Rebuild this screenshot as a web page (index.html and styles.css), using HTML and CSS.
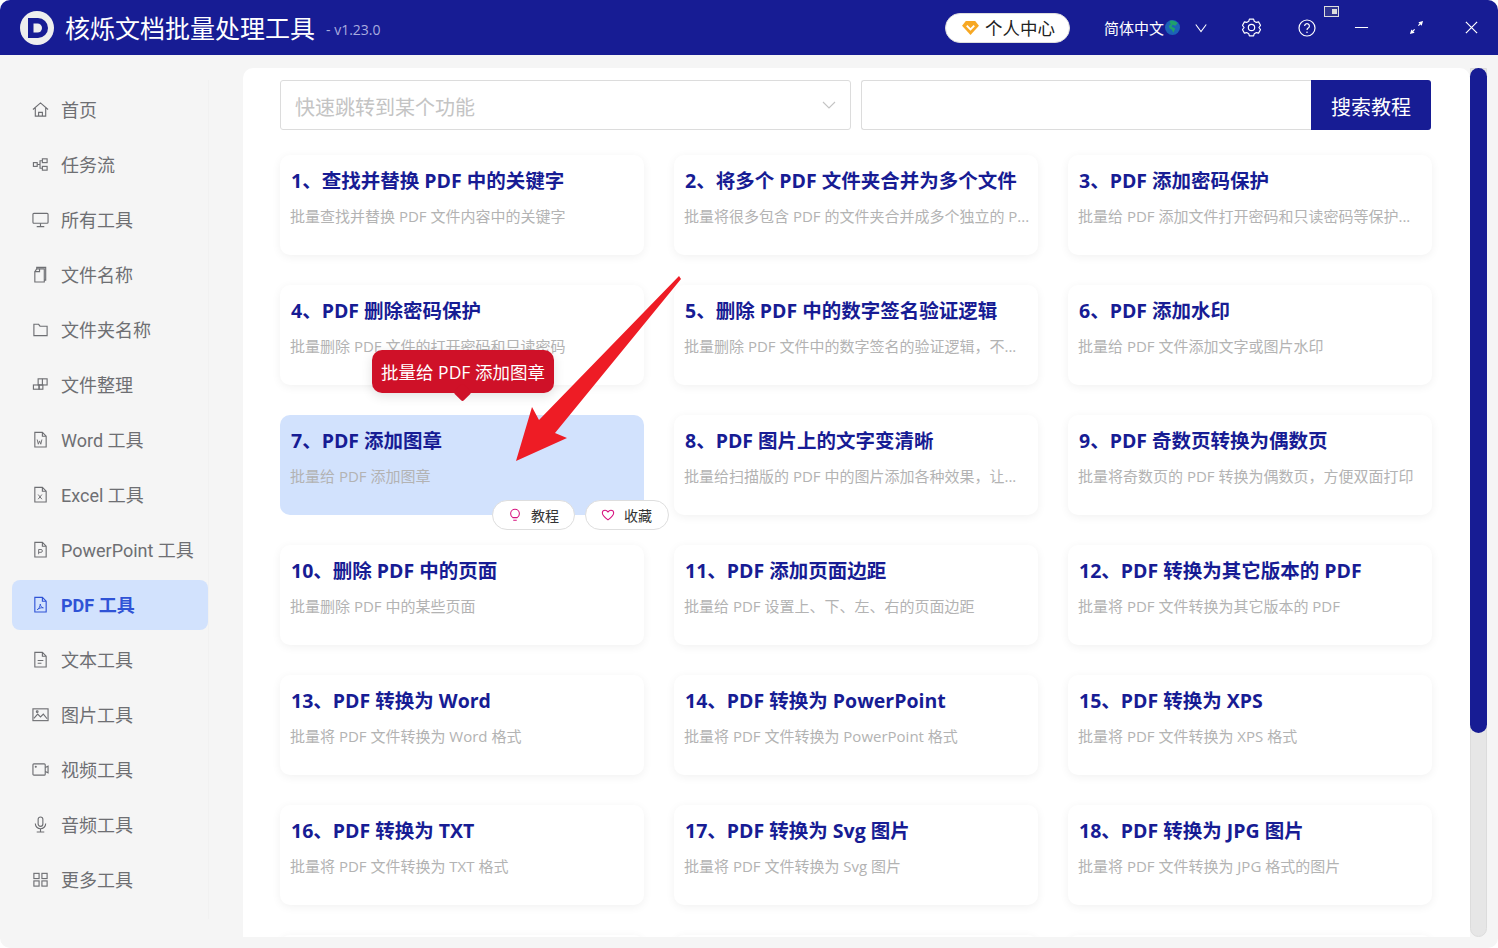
FILE: index.html
```html
<!DOCTYPE html>
<html lang="zh-CN">
<head>
<meta charset="utf-8">
<title>核烁文档批量处理工具</title>
<link rel="stylesheet" href="styles.css">
</head>
<body>
<div class="app">
  <header class="topbar">
    <svg class="logo" viewBox="0 0 36 36"><circle cx="18" cy="18" r="17" fill="#eeeeee"/><path d="M9 8h10a10 10 0 0 1 0 20H9z" fill="#171c94"/><path d="M14.500 13.500h4a4.500 4.500 0 0 1 0 9h-4z" fill="#eeeeee"/></svg>
    <span class="app-title">核烁文档批量处理工具</span>
    <span class="version">- v1.23.0</span>
    <span class="spacer"></span>
    <button class="profile">
      <svg class="diamond" viewBox="0 0 18 16"><path d="M4 1h10l4 5-9 10L0 6z" fill="#f7a823"/><path d="M5 6l4 4 4-4" fill="none" stroke="#fff" stroke-width="2"/></svg>
      个人中心
    </button>
    <span class="lang">简体中文</span>
    <svg class="globe" viewBox="0 0 16 16"><circle cx="8" cy="8" r="8" fill="#1c62b8"/><path d="M5 1c3-1 6 0 8.500 2.500l-2.500 2.500-3-1-1 2 4 2-2 4.500-2-3.500-2-1-1-3 2-1z" fill="#1fa06c"/></svg>
    <svg class="ctl chev" viewBox="0 0 16 16"><path d="M2 4l6 8 6-8" fill="none" stroke="#fff" stroke-width="1.200"/></svg>
    <svg class="ctl gear" viewBox="0 0 18 18"><path d="M7 1h4l.6 2.100 2 1.100 2.100-.5 1.900 3.300L16 9l1.600 2-1.900 3.300-2.100-.5-2 1.100L11 17H7l-.6-2.100-2-1.100-2.100.5L.4 11 2 9 .4 7l1.900-3.300 2.100.5 2-1.100z" fill="none" stroke="#fff" stroke-width="1.100" stroke-linejoin="round"/><circle cx="9" cy="9" r="3" fill="none" stroke="#fff" stroke-width="1.100"/></svg>
    <svg class="ctl help" viewBox="0 0 18 18"><circle cx="9" cy="9" r="8" fill="none" stroke="#fff" stroke-width="1.200"/><path d="M6.600 7a2.400 2.400 0 1 1 3.600 2.100c-.8.500-1.200.9-1.200 1.900" fill="none" stroke="#fff" stroke-width="1.200"/><circle cx="9" cy="13.300" r=".8" fill="#fff"/></svg>
    <svg class="ctl pip" viewBox="0 0 16 12"><rect x=".5" y=".5" width="14" height="10" fill="#30348f" stroke="#ddd"/><rect x="8" y="3" width="5" height="5" fill="#ddd"/></svg>
    <svg class="ctl min" viewBox="0 0 16 16"><path d="M1 8h14" stroke="#fff" stroke-width="1.300"/></svg>
    <svg class="ctl expand" viewBox="0 0 16 16"><path d="M15 1l-5 1.500L13.500 6zM1 15l5-1.500L2.500 10z" fill="#fff"/><path d="M12 4l-2 2M4 12l2-2" stroke="#fff" stroke-width="1.200"/></svg>
    <svg class="ctl close" viewBox="0 0 16 16"><path d="M2 2l12 12M14 2L2 14" stroke="#fff" stroke-width="1.300"/></svg>
  </header>

  <div class="body">
    <nav class="sidebar">
      <a class="nav"><svg viewBox="0 0 18 18"><path d="M1 9l8-7 8 7M3.500 7.500V16h11V7.500M7 16v-4h4v4"/></svg>首页</a>
      <a class="nav"><svg viewBox="0 0 18 18"><rect x="1.500" y="7" width="4" height="4"/><rect x="11" y="3" width="5" height="4"/><rect x="11" y="11" width="5" height="4"/><path d="M5.500 9H8.500V5H11M8.500 9v4H11"/></svg>任务流</a>
      <a class="nav"><svg viewBox="0 0 18 18"><rect x="1" y="2.500" width="16" height="10.500" rx="1"/><path d="M9 13v3M5 16.500h8"/></svg>所有工具</a>
      <a class="nav"><svg viewBox="0 0 18 18"><path d="M5 3V1.500h9.500V15H13M5 3L3 6v11h10V3z"/><path d="M8 3v3H3"/></svg>文件名称</a>
      <a class="nav"><svg viewBox="0 0 18 18"><path d="M2 3.500h5l1.500 2H16v10H2z"/></svg>文件夹名称</a>
      <a class="nav"><svg viewBox="0 0 18 18"><rect x="6.500" y="3" width="9.500" height="6.500"/><rect x="1.500" y="9.500" width="6" height="4.500"/><rect x="7.500" y="9.500" width="4" height="4.500"/><path d="M11 3v6.500"/></svg>文件整理</a>
      <a class="nav"><svg viewBox="0 0 18 18"><path d="M3 1.500h8l4 4v11.500H3zM11 1.500v4h4"/><path class="thin" d="M5.500 9l1.200 5 1.300-3.500 1.300 3.500 1.200-5"/></svg>Word 工具</a>
      <a class="nav"><svg viewBox="0 0 18 18"><path d="M3 1.500h8l4 4v11.500H3zM11 1.500v4h4"/><path class="thin" d="M6.500 9l4 5M10.500 9l-4 5"/></svg>Excel 工具</a>
      <a class="nav"><svg viewBox="0 0 18 18"><path d="M3 1.500h8l4 4v11.500H3zM11 1.500v4h4"/><path class="thin" d="M7 14V9h2.500a1.500 1.500 0 0 1 0 3H7"/></svg>PowerPoint 工具</a>
      <a class="nav active"><svg viewBox="0 0 18 18"><path d="M3 1.500h8l4 4v11.500H3zM11 1.500v4h4"/><path class="thin" d="M5.500 14.500c2-1 3-3.500 3.300-6 .3 2.500 1.200 3.500 3.200 4-2.500-.3-4.500.3-6.500 2z"/></svg>PDF 工具</a>
      <a class="nav"><svg viewBox="0 0 18 18"><path d="M3 1.500h8l4 4v11.500H3zM11 1.500v4h4M6 10h6M6 13h4"/></svg>文本工具</a>
      <a class="nav"><svg viewBox="0 0 18 18"><rect x="1" y="3" width="16" height="12.500"/><path d="M2 13l4-4.500 3 3 3-3 4 5"/><circle cx="5.500" cy="6" r=".9"/></svg>图片工具</a>
      <a class="nav"><svg viewBox="0 0 18 18"><rect x="1" y="3" width="13" height="12" rx="1"/><path d="M14 7l3-1.500v7L14 11"/><circle cx="4" cy="6" r=".5"/></svg>视频工具</a>
      <a class="nav"><svg viewBox="0 0 18 18"><rect x="6.500" y="1" width="5" height="10" rx="2.500"/><path d="M3.500 8a5.500 5.500 0 0 0 11 0M9 13.500V16.500M5 17h8"/></svg>音频工具</a>
      <a class="nav"><svg viewBox="0 0 18 18"><rect x="2" y="2.500" width="5.500" height="5.500"/><rect x="10.500" y="2.500" width="5.500" height="5.500"/><rect x="2" y="10.500" width="5.500" height="5.500"/><rect x="10.500" y="10.500" width="5.500" height="5.500"/></svg>更多工具</a>
    </nav>

    <main class="panel">
      <div class="search">
        <div class="select">
          <span>快速跳转到某个功能</span>
          <svg viewBox="0 0 14 8"><path d="M1 1l6 6 6-6" fill="none" stroke="#c4c4c4" stroke-width="1.100"/></svg>
        </div>
        <div class="input"></div>
        <button class="search-btn">搜索教程</button>
      </div>
      <div class="grid">
        <article class="card"><h3>1、查找并替换 PDF 中的关键字</h3><p>批量查找并替换 PDF 文件内容中的关键字</p></article>
        <article class="card"><h3>2、将多个 PDF 文件夹合并为多个文件</h3><p>批量将很多包含 PDF 的文件夹合并成多个独立的 P...</p></article>
        <article class="card"><h3>3、PDF 添加密码保护</h3><p>批量给 PDF 添加文件打开密码和只读密码等保护...</p></article>
        <article class="card"><h3>4、PDF 删除密码保护</h3><p>批量删除 PDF 文件的打开密码和只读密码</p></article>
        <article class="card"><h3>5、删除 PDF 中的数字签名验证逻辑</h3><p>批量删除 PDF 文件中的数字签名的验证逻辑，不...</p></article>
        <article class="card"><h3>6、PDF 添加水印</h3><p>批量给 PDF 文件添加文字或图片水印</p></article>
        <article class="card hover"><h3>7、PDF 添加图章</h3><p>批量给 PDF 添加图章</p>
          <div class="tip">批量给 PDF 添加图章</div>
          <div class="pills">
            <span class="pill"><svg viewBox="0 0 14 16"><path d="M4.500 11C3 10 2 8.500 2 6.500a5 5 0 0 1 10 0c0 2-1 3.500-2.500 4.500zM5 14h4"/></svg>教程</span>
            <span class="pill"><svg viewBox="0 0 16 14"><path d="M8 12.500C3 9 1.500 7 1.500 4.800 1.500 3 3 1.500 4.700 1.500c1.300 0 2.500.7 3.300 2 .8-1.300 2-2 3.300-2 1.700 0 3.200 1.500 3.200 3.300C14.500 7 13 9 8 12.500z"/></svg>收藏</span>
          </div>
        </article>
        <article class="card"><h3>8、PDF 图片上的文字变清晰</h3><p>批量给扫描版的 PDF 中的图片添加各种效果，让...</p></article>
        <article class="card"><h3>9、PDF 奇数页转换为偶数页</h3><p>批量将奇数页的 PDF 转换为偶数页，方便双面打印</p></article>
        <article class="card"><h3>10、删除 PDF 中的页面</h3><p>批量删除 PDF 中的某些页面</p></article>
        <article class="card"><h3>11、PDF 添加页面边距</h3><p>批量给 PDF 设置上、下、左、右的页面边距</p></article>
        <article class="card"><h3>12、PDF 转换为其它版本的 PDF</h3><p>批量将 PDF 文件转换为其它版本的 PDF</p></article>
        <article class="card"><h3>13、PDF 转换为 Word</h3><p>批量将 PDF 文件转换为 Word 格式</p></article>
        <article class="card"><h3>14、PDF 转换为 PowerPoint</h3><p>批量将 PDF 文件转换为 PowerPoint 格式</p></article>
        <article class="card"><h3>15、PDF 转换为 XPS</h3><p>批量将 PDF 文件转换为 XPS 格式</p></article>
        <article class="card"><h3>16、PDF 转换为 TXT</h3><p>批量将 PDF 文件转换为 TXT 格式</p></article>
        <article class="card"><h3>17、PDF 转换为 Svg 图片</h3><p>批量将 PDF 文件转换为 Svg 图片</p></article>
        <article class="card"><h3>18、PDF 转换为 JPG 图片</h3><p>批量将 PDF 文件转换为 JPG 格式的图片</p></article>
        <article class="card"></article>
        <article class="card"></article>
        <article class="card"></article>
      </div>
      <svg class="arrow" viewBox="0 0 200 200"><path d="M6 196L22 142 29 155 169 11 171 14 45 168 57 173z" fill="#ee1c25"/></svg>
    </main>

    <div class="scrollbar"><div class="thumb"></div></div>
  </div>
</div>
</body>
</html>
```

FILE: styles.css
```css
* { box-sizing: border-box; }
html, body { margin: 0; height: 948px; overflow: hidden; background: #fff; }
body { font-family: "Open Sans", "Noto Sans CJK SC", sans-serif; }
button { font-family: inherit; border: 0; padding: 0; }

.app { height: 948px; display: flex; flex-direction: column; background: #f5f5f5; border-radius: 10px; overflow: hidden; }

.topbar { height: 55px; flex: none; background: #171c94; display: flex; align-items: center; padding-left: 19px; color: #fff; position: relative; }
.logo { width: 36px; height: 36px; flex: none; }
.app-title { font-size: 25px; margin-left: 10px; line-height: 30px; white-space: nowrap; }
.version { font-size: 14px; color: #a9acdf; margin-left: 11px; margin-top: 3px; white-space: nowrap; }
.spacer { flex: 1; }
.profile { width: 125px; height: 30px; border-radius: 15px; background: #fff; color: #222; font-size: 17.500px; display: flex; align-items: center; justify-content: flex-start; padding-left: 16px; gap: 6px; border: 1px solid #ddd; margin-right: 34px; white-space: nowrap; }
.diamond { width: 17px; height: 15px; flex: none; }
.lang { font-size: 15px; white-space: nowrap; }
.globe { width: 15px; height: 15px; margin-left: 1px; flex: none; }
.ctl { flex: none; }
.chev { width: 14px; height: 14px; margin-left: 14px; }
.gear { width: 19px; height: 19px; margin-left: 34px; }
.help { width: 18px; height: 18px; margin-left: 37px; }
.pip { width: 16px; height: 12px; position: absolute; right: 158px; top: 6px; }
.min { width: 15px; height: 15px; margin-left: 38px; }
.expand { width: 15px; height: 15px; margin-left: 40px; }
.close { width: 15px; height: 15px; margin-left: 40px; margin-right: 19px; }

.body { flex: 1; display: flex; min-height: 0; }

.sidebar { width: 209px; flex: none; margin: 25px 0 29px; padding: 5px 0 0 12px; border-right: 1px solid #f1f1f1; display: flex; flex-direction: column; gap: 5px; font-family: Roboto, "Noto Sans CJK SC", sans-serif; }
.nav { height: 50px; flex: none; display: flex; align-items: center; gap: 12px; padding: 0 0 2px 20px; font-size: 18px; color: #6e6f73; border-radius: 8px; white-space: nowrap; }
.nav svg { width: 17px; height: 17px; flex: none; fill: none; stroke: #6e6f73; stroke-width: 1.200; }
.nav svg .thin { stroke-width: 1; }
.nav.active { background: #d2e2fd; color: #2f53d6; font-weight: 700; }
.nav.active svg { stroke: #2f53d6; }

.panel { width: 1227px; margin: 13px 0 11px 34px; padding: 12px 0 0 37px; background: #fff; border-radius: 10px 10px 0 0; overflow: hidden; position: relative; }
.search { display: flex; height: 50px; width: 1151px; }
.select { width: 571px; border: 1px solid #dcdcdc; border-radius: 3px; display: flex; align-items: center; justify-content: space-between; padding: 2px 14px 0; font-size: 20px; color: #c4c4c4; }
.select svg { width: 14px; height: 8px; margin-top: -3px; }
.input { flex: 1; margin-left: 10px; border: 1px solid #dcdcdc; border-right: 0; border-radius: 3px 0 0 3px; }
.search-btn { width: 120px; background: #171c94; color: #fff; font-size: 20px; border-radius: 0 3px 3px 0; padding-top: 2px; }

.grid { display: grid; grid-template-columns: repeat(3, 364px); grid-auto-rows: 100px; column-gap: 30px; row-gap: 30px; margin-top: 25px; }
.card { background: #fff; border-radius: 10px; box-shadow: 0 2px 10px rgba(0, 0, 0, .06); padding: 12px 10px; position: relative; }
.card h3 { margin: 0; font-size: 19.500px; line-height: 28px; font-weight: 700; color: #171c94; padding-left: 1px; white-space: nowrap; }
.card p { margin: 11px 0 0; font-size: 15px; line-height: 20px; color: #b3b3b3; white-space: nowrap; }
.card.hover { background: #d2e2fd; box-shadow: none; }

.tip { position: absolute; left: 92px; top: -65px; width: 182px; height: 43px; border-radius: 10px; background: #cf1128; color: #fff; font-size: 17.500px; display: flex; align-items: center; justify-content: center; white-space: nowrap; z-index: 2; box-shadow: 0 3px 12px rgba(0, 0, 0, .12); }
.tip::after { content: ""; position: absolute; left: 84px; bottom: -6px; width: 13px; height: 13px; background: #cf1128; transform: rotate(45deg); border-radius: 2px; }

.pills { position: absolute; left: 212px; top: 85px; display: flex; gap: 10px; z-index: 2; }
.pill { width: 83px; height: 30px; border-radius: 15px; background: #fff; border: 1px solid #dedede; display: flex; align-items: center; padding-left: 15px; gap: 9px; font-size: 14px; color: #333; white-space: nowrap; }
.pill + .pill { width: 84px; }
.pill svg { width: 14px; height: 14px; flex: none; fill: none; stroke: #d6127f; stroke-width: 1.200; }

.arrow { position: absolute; left: 267px; top: 197px; width: 200px; height: 200px; z-index: 3; }

.scrollbar { width: 17px; flex: none; margin: 13px 0 11px; background: #e6e6e6; border: 1px solid #dcdcdc; border-radius: 0 0 9px 9px; position: relative; }
.thumb { position: absolute; left: -1px; right: -1px; top: -1px; height: 665px; border-radius: 9px; background: #171c94; }
```
